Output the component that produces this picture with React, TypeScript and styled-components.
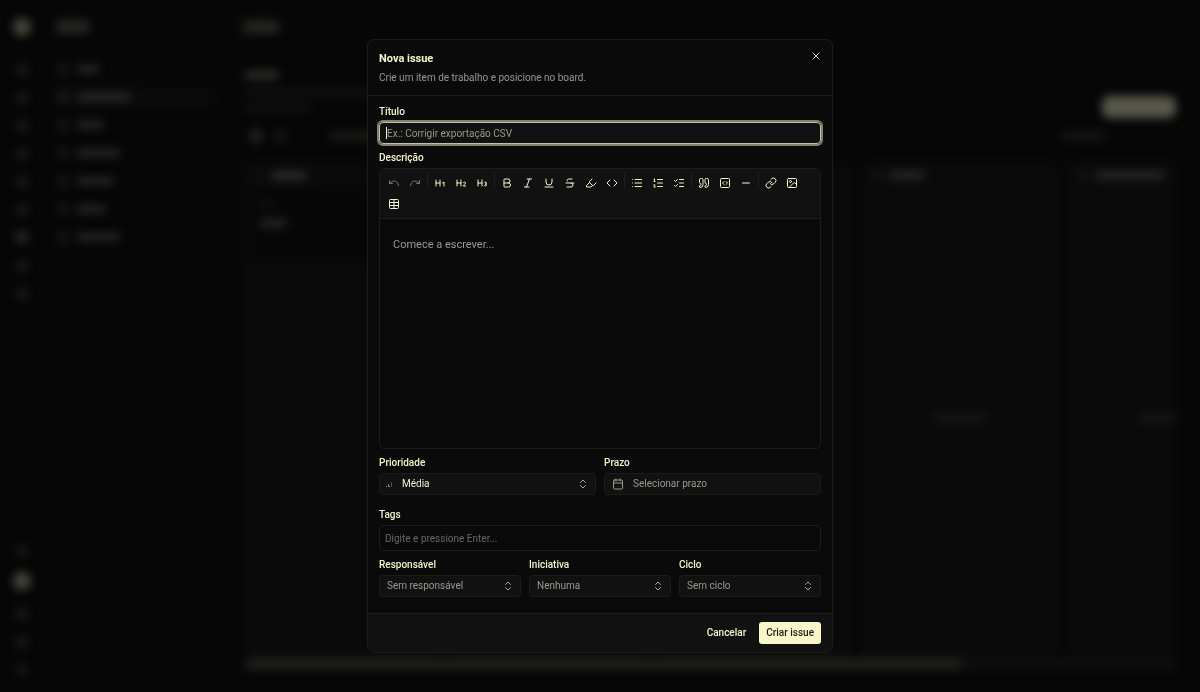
import React from "react";
import styled, { createGlobalStyle } from "styled-components";
import {
  Bold,
  Calendar,
  ChevronsUpDown,
  Code,
  Heading1,
  Heading2,
  Heading3,
  Highlighter,
  Image as ImageIcon,
  Italic,
  Link as LinkIcon,
  List,
  ListChecks,
  ListOrdered,
  Minus,
  Quote,
  Redo,
  SquareCode,
  Strikethrough,
  Table,
  Underline,
  Undo,
  X,
} from "lucide-react";

const color = {
  page: "#060606",
  surface: "#0a0a0a",
  raised: "#111111",
  line: "#1d1d1c",
  cream: "#f6f4cc",
  text: "#f3f2da",
  muted: "#9a988c",
  faint: "#68675f",
  accent: "#f9f7c9",
};

const Global = createGlobalStyle`
  *, *::before, *::after { box-sizing: border-box; }
  html, body, #root { height: 100%; }
  body {
    margin: 0;
    background: ${color.page};
    color: ${color.text};
    font-family: Roboto, "Liberation Sans", sans-serif;
    font-size: 10px;
    line-height: 16px;
    overflow: hidden;
  }
  button, input, textarea, select { font: inherit; color: inherit; margin: 0; }
`;

/* Blurred workspace behind the dialog */

const Workspace = styled.div`
  display: flex;
  height: 100vh;
  filter: blur(5px);
`;

const Rail = styled.div`
  display: flex;
  flex-direction: column;
  align-items: center;
  justify-content: space-between;
  width: 44px;
  padding: 18px 0 15px;
`;

const RailGroup = styled.div`
  display: flex;
  flex-direction: column;
  align-items: center;
  gap: 14px;
`;

const Dot = styled.span<{ $size?: number; $tone?: string }>`
  width: 14px;
  height: 14px;
  display: grid;
  place-items: center;
  &::before {
    content: "";
    width: ${(p) => p.$size ?? 10}px;
    height: ${(p) => p.$size ?? 10}px;
    border-radius: 50%;
    background: ${(p) => p.$tone ?? "#1f1f1d"};
  }
`;

const Logo = styled.span`
  width: 18px;
  height: 18px;
  margin-bottom: 12px;
  border-radius: 50%;
  background: #48473b;
`;

const Avatar = styled.span`
  width: 18px;
  height: 18px;
  margin-bottom: 3px;
  border-radius: 50%;
  background: #48473b;
`;

const Sidebar = styled.div`
  display: flex;
  flex-direction: column;
  gap: 6px;
  width: 195px;
  padding: 20px 24px 0 8px;
  border-right: 1px solid #0e0e0e;
`;

const Bar = styled.span<{ $w: number; $h?: number; $tone?: string }>`
  display: block;
  flex: none;
  width: ${(p) => p.$w}px;
  height: ${(p) => p.$h ?? 8}px;
  border-radius: 4px;
  background: ${(p) => p.$tone ?? "#272724"};
`;

const SideTitle = styled.div`
  padding: 0 0 18px 4px;
`;

const SideItem = styled.div<{ $active?: boolean }>`
  display: flex;
  align-items: center;
  gap: 6px;
  height: 22px;
  padding-left: 4px;
  border-radius: 6px;
  background: ${(p) => (p.$active ? "#0a0a0a" : "transparent")};
`;

const Main = styled.div`
  display: flex;
  flex: 1;
  flex-direction: column;
  min-width: 0;
  padding: 20px 24px 22px 4px;
`;

const PageHead = styled.div`
  display: flex;
  align-items: center;
  justify-content: space-between;
  height: 54px;
  margin-top: 21px;
`;

const Intro = styled.div`
  display: flex;
  flex-direction: column;
  gap: 10px;
  padding: 16px 0 0 2px;
`;

const PrimaryGhost = styled.span`
  width: 74px;
  height: 22px;
  margin-top: 50px;
  border-radius: 8px;
  background: #58574b;
`;

const Filters = styled.div`
  display: flex;
  align-items: center;
  gap: 10px;
  height: 20px;
  margin: 17px 0 16px;
  padding: 0 70px 0 6px;
`;

const FilterSearch = styled.span`
  flex: 1;
  padding-left: 32px;
`;

const Board = styled.div`
  display: flex;
  flex: 1;
  gap: 9px;
  min-height: 0;
  overflow: hidden;
`;

const Column = styled.div`
  display: flex;
  flex: none;
  flex-direction: column;
  width: 197px;
  background: #0a0a0a;
`;

const ColumnHead = styled.div`
  display: flex;
  align-items: center;
  gap: 4px;
  height: 26px;
  padding-left: 10px;
`;

const Card = styled.div`
  display: flex;
  flex-direction: column;
  gap: 12px;
  height: 74px;
  margin: 0 8px;
  padding: 14px 8px;
  border-radius: 6px;
  background: ${color.page};
`;

const ColumnEmpty = styled.div`
  display: grid;
  flex: 1;
  justify-content: center;
  padding-top: 226px;
`;

const ScrollTrack = styled.div`
  height: 12px;
  margin-left: 2px;
  border-radius: 6px;
  background: #0e0e0d;
`;

const ScrollThumb = styled.div`
  width: 77%;
  height: 12px;
  border-radius: 6px;
  background: #1e1e1b;
`;

/* Dialog */

const Overlay = styled.div`
  position: fixed;
  inset: 0;
  display: grid;
  place-items: center;
`;

const Dialog = styled.form`
  position: relative;
  width: 100%;
  max-width: 466px;
  border: 1px solid ${color.line};
  border-radius: 7px;
  background: ${color.surface};
  overflow: hidden;
`;

const Header = styled.header`
  display: flex;
  align-items: flex-start;
  justify-content: space-between;
  padding: 9px 9px 9px 11px;
  border-bottom: 1px solid ${color.line};
`;

const Heading = styled.h2`
  margin: 0 0 1px;
  color: ${color.cream};
  font-size: 11px;
  font-weight: 700;
  line-height: 20px;
`;

const Lead = styled.p`
  margin: 0;
  color: ${color.muted};
`;

const CloseButton = styled.button`
  display: grid;
  place-items: center;
  width: 14px;
  height: 14px;
  padding: 0;
  border: 0;
  background: none;
  color: #d2d0b8;
`;

const Body = styled.div`
  display: flex;
  flex-direction: column;
  gap: 6px;
  padding: 8px 11px 16px;
`;

const Field = styled.div`
  display: flex;
  flex-direction: column;
  gap: 2px;
  min-width: 0;
`;

const Label = styled.label`
  color: ${color.cream};
  font-weight: 500;
`;

const InputWrap = styled.div`
  position: relative;
  display: grid;
`;

const Caret = styled.span`
  position: absolute;
  left: 7px;
  top: 5px;
  width: 1px;
  height: 12px;
  background: ${color.text};
`;

const TitleInput = styled.input`
  width: 100%;
  height: 22px;
  padding: 0 7px;
  border: 1px solid #c4c2a6;
  border-radius: 4px;
  outline: 2px solid #84826f;
  background: ${color.raised};
  caret-color: transparent;
  &::placeholder { color: ${color.muted}; opacity: 1; }
`;

const TagsInput = styled.input`
  width: 100%;
  height: 26px;
  padding: 0 5px;
  border: 1px solid ${color.line};
  border-radius: 4px;
  background: transparent;
  &::placeholder { color: ${color.faint}; opacity: 1; }
`;

const Editor = styled.div`
  border: 1px solid ${color.line};
  border-radius: 5px;
  overflow: hidden;
`;

const Toolbar = styled.div`
  display: flex;
  flex-wrap: wrap;
  gap: 1px;
  padding: 4px;
  border-bottom: 1px solid ${color.line};
  background: ${color.raised};
`;

const Tool = styled.button`
  display: grid;
  place-items: center;
  width: 20px;
  height: 20px;
  padding: 0;
  border: 0;
  border-radius: 4px;
  background: none;
  color: ${color.cream};
  &:disabled { color: #77766a; }
`;

const Divider = styled.span`
  width: 1px;
  height: 16px;
  margin: 0 1px;
  background: ${color.line};
`;

const Writing = styled.textarea`
  display: block;
  width: 100%;
  height: 229px;
  padding: 17px 13px;
  border: 0;
  outline: 0;
  resize: none;
  background: transparent;
  font-size: 11px;
  line-height: 18px;
  &::placeholder { color: ${color.muted}; opacity: 1; }
`;

const Columns = styled.div<{ $count: number; $spaced?: boolean }>`
  display: grid;
  grid-template-columns: repeat(${(p) => p.$count}, minmax(0, 1fr));
  gap: 8px;
  padding-bottom: ${(p) => (p.$spaced ? 6 : 0)}px;
`;

const SelectWrap = styled.div<{ $strong?: boolean }>`
  position: relative;
  display: grid;
  color: ${(p) => (p.$strong ? color.text : color.muted)};
`;

const Select = styled.select<{ $icon?: boolean }>`
  width: 100%;
  height: 22px;
  padding: 0 22px 0 ${(p) => (p.$icon ? 22 : 7)}px;
  border: 1px solid ${color.line};
  border-radius: 4px;
  background: ${color.raised};
  appearance: none;
`;

const SelectChevron = styled.span`
  position: absolute;
  right: 7px;
  top: 5px;
  display: grid;
  color: #a8a692;
  pointer-events: none;
`;

const SelectLead = styled.span`
  position: absolute;
  left: 7px;
  top: 7px;
  display: grid;
  color: #8a8878;
  pointer-events: none;
`;

const DateButton = styled.button`
  display: flex;
  align-items: center;
  gap: 9px;
  height: 22px;
  padding: 0 7px;
  border: 1px solid ${color.line};
  border-radius: 4px;
  background: ${color.raised};
  color: ${color.muted};
`;

const Footer = styled.footer`
  display: flex;
  align-items: center;
  justify-content: flex-end;
  gap: 6px;
  padding: 8px 11px;
  border-top: 1px solid ${color.line};
  background: ${color.raised};
`;

const Action = styled.button<{ $primary?: boolean }>`
  height: 22px;
  padding: 0 7px;
  border: 0;
  border-radius: 3px;
  background: ${(p) => (p.$primary ? color.accent : "transparent")};
  color: ${(p) => (p.$primary ? "#1b1b18" : color.cream)};
  font-weight: 500;
`;

const toolGroups = [
  [
    { label: "Desfazer", icon: Undo, disabled: true },
    { label: "Refazer", icon: Redo, disabled: true },
  ],
  [
    { label: "Título 1", icon: Heading1 },
    { label: "Título 2", icon: Heading2 },
    { label: "Título 3", icon: Heading3 },
  ],
  [
    { label: "Negrito", icon: Bold },
    { label: "Itálico", icon: Italic },
    { label: "Sublinhado", icon: Underline },
    { label: "Tachado", icon: Strikethrough },
    { label: "Destacar", icon: Highlighter },
    { label: "Código", icon: Code },
  ],
  [
    { label: "Lista", icon: List },
    { label: "Lista numerada", icon: ListOrdered },
    { label: "Lista de tarefas", icon: ListChecks },
  ],
  [
    { label: "Citação", icon: Quote },
    { label: "Bloco de código", icon: SquareCode },
    { label: "Linha horizontal", icon: Minus },
  ],
  [
    { label: "Link", icon: LinkIcon },
    { label: "Imagem", icon: ImageIcon },
    { label: "Tabela", icon: Table },
  ],
] as { label: string; icon: React.ElementType; disabled?: boolean }[][];

function SelectField(props: { id: string; label: string; value: string; lead?: React.ReactNode }) {
  return (
    <Field>
      <Label htmlFor={props.id}>{props.label}</Label>
      <SelectWrap $strong={!!props.lead}>
        <Select id={props.id} $icon={!!props.lead}>
          <option>{props.value}</option>
        </Select>
        {props.lead && <SelectLead>{props.lead}</SelectLead>}
        <SelectChevron>
          <ChevronsUpDown size={12} />
        </SelectChevron>
      </SelectWrap>
    </Field>
  );
}

function PriorityIcon() {
  return (
    <svg width="8" height="8" viewBox="0 0 8 8" fill="currentColor" aria-hidden="true">
      <rect x="0" y="6" width="1" height="1" />
      <rect x="2" y="4" width="1" height="3" />
      <rect x="3" y="6" width="1" height="1" />
      <rect x="5" y="2" width="1" height="5" opacity="0.5" />
    </svg>
  );
}

const sideItems = [24, 56, 28, 44, 38, 30, 44];

function Background() {
  return (
    <Workspace aria-hidden="true">
      <Rail>
        <RailGroup>
          <Logo />
          {[0, 1, 2, 3, 4, 5, 6, 7, 8].map((n) => (
            <Dot key={n} $size={n === 6 ? 14 : 11} $tone={n === 6 ? "#252522" : undefined} />
          ))}
        </RailGroup>
        <RailGroup>
          <Dot />
          <Avatar />
          <Dot $size={12} />
          <Dot $size={12} />
          <Dot />
        </RailGroup>
      </Rail>
      <Sidebar>
        <SideTitle>
          <Bar $w={34} $h={14} $tone="#242421" />
        </SideTitle>
        {sideItems.map((w, n) => (
          <SideItem key={n} $active={n === 1}>
            <Dot />
            <Bar $w={w} />
          </SideItem>
        ))}
      </Sidebar>
      <Main>
        <Bar $w={36} $h={14} $tone="#242421" />
        <PageHead>
          <Intro>
            <Bar $w={34} $h={10} $tone="#292925" />
            <Bar $w={240} $h={5} $tone="#181817" />
            <Bar $w={66} $h={5} $tone="#181817" />
          </Intro>
          <PrimaryGhost />
        </PageHead>
        <Filters>
          <Dot $size={14} $tone="#252522" />
          <Dot />
          <FilterSearch>
            <Bar $w={60} $tone="#1e1e1c" />
          </FilterSearch>
          <Bar $w={46} $tone="#171716" />
        </Filters>
        <Board>
          <Column>
            <ColumnHead>
              <Dot $tone="#0e0e0e" />
              <Bar $w={36} $h={9} $tone="#2b2b27" />
            </ColumnHead>
            <Card>
              <Bar $w={16} $h={5} $tone="#151514" />
              <Bar $w={28} />
            </Card>
          </Column>
          {[34, 34, 36, 70].map((w, n) => (
            <Column key={n}>
              <ColumnHead>
                <Dot $tone="#151514" />
                <Bar $w={w} />
              </ColumnHead>
              <ColumnEmpty>
                <Bar $w={54} $tone="#171716" />
              </ColumnEmpty>
            </Column>
          ))}
        </Board>
        <ScrollTrack>
          <ScrollThumb />
        </ScrollTrack>
      </Main>
    </Workspace>
  );
}

export default function App() {
  return (
    <>
      <Global />
      <Background />
      <Overlay>
        <Dialog role="dialog" aria-labelledby="dialog-title" onSubmit={(e) => e.preventDefault()}>
          <Header>
            <div>
              <Heading id="dialog-title">Nova issue</Heading>
              <Lead>Crie um item de trabalho e posicione no board.</Lead>
            </div>
            <CloseButton type="button" aria-label="Fechar">
              <X size={12} />
            </CloseButton>
          </Header>
          <Body>
            <Field>
              <Label htmlFor="title">Título</Label>
              <InputWrap>
                <TitleInput id="title" placeholder="Ex.: Corrigir exportação CSV" />
                <Caret />
              </InputWrap>
            </Field>
            <Field>
              <Label htmlFor="description">Descrição</Label>
              <Editor>
                <Toolbar role="toolbar">
                  {toolGroups.map((group, g) => (
                    <React.Fragment key={g}>
                      {g > 0 && <Divider />}
                      {group.map(({ label, icon: Icon, disabled }) => (
                        <Tool key={label} type="button" aria-label={label} disabled={disabled}>
                          <Icon size={12} />
                        </Tool>
                      ))}
                    </React.Fragment>
                  ))}
                </Toolbar>
                <Writing id="description" placeholder="Comece a escrever..." />
              </Editor>
            </Field>
            <Columns $count={2} $spaced>
              <SelectField id="priority" label="Prioridade" value="Média" lead={<PriorityIcon />} />
              <Field>
                <Label htmlFor="due">Prazo</Label>
                <DateButton id="due" type="button">
                  <Calendar size={12} />
                  Selecionar prazo
                </DateButton>
              </Field>
            </Columns>
            <Field>
              <Label htmlFor="tags">Tags</Label>
              <TagsInput id="tags" placeholder="Digite e pressione Enter..." />
            </Field>
            <Columns $count={3}>
              <SelectField id="owner" label="Responsável" value="Sem responsável" />
              <SelectField id="initiative" label="Iniciativa" value="Nenhuma" />
              <SelectField id="cycle" label="Ciclo" value="Sem ciclo" />
            </Columns>
          </Body>
          <Footer>
            <Action type="button">Cancelar</Action>
            <Action type="submit" $primary>
              Criar issue
            </Action>
          </Footer>
        </Dialog>
      </Overlay>
    </>
  );
}
